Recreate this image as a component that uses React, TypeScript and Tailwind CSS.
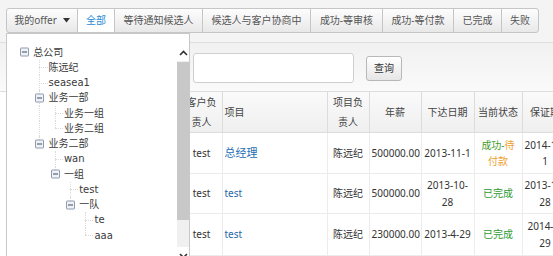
import React from "react";

type TreeNode = {
  level: number;
  label: string;
  parent?: boolean;
  last?: boolean;
  lines?: number[];
};

const tree: TreeNode[] = [
  { level: 0, label: "总公司", parent: true, last: true },
  { level: 1, label: "陈远纪" },
  { level: 1, label: "seasea1" },
  { level: 1, label: "业务一部", parent: true },
  { level: 2, label: "业务一组", lines: [1] },
  { level: 2, label: "业务二组", last: true, lines: [1] },
  { level: 1, label: "业务二部", parent: true, last: true },
  { level: 2, label: "wan" },
  { level: 2, label: "一组", parent: true, last: true },
  { level: 3, label: "test" },
  { level: 3, label: "一队", parent: true, last: true },
  { level: 4, label: "te" },
  { level: 4, label: "aaa", last: true },
];

const tabs = [
  { label: "全部", w: "w-[37px]", active: true },
  { label: "等待通知候选人", w: "w-[88px]" },
  { label: "候选人与客户协商中", w: "w-[108px]" },
  { label: "成功-等审核", w: "w-[72px]" },
  { label: "成功-等付款", w: "w-[71px]" },
  { label: "已完成", w: "w-[48px]" },
  { label: "失败", w: "w-[36px]", last: true },
];

const rows = [
  {
    h: "h-[41px]",
    cells: ["李明", "华信科技", "test"],
    project: "总经理",
    big: true,
    owner: "陈远纪",
    salary: "500000.00",
    date: "2013-11-1",
    status: "pay",
    guarantee: "2014-11-1",
  },
  {
    h: "h-[40px]",
    cells: ["王芳", "华信科技", "test"],
    project: "test",
    owner: "陈远纪",
    salary: "500000.00",
    date: "2013-10-28",
    status: "done",
    guarantee: "2013-11-28",
  },
  {
    h: "h-[42px]",
    cells: ["张伟", "远景集团", "test"],
    project: "test",
    owner: "陈远纪",
    salary: "230000.00",
    date: "2013-4-29",
    status: "done",
    guarantee: "2014-4-29",
  },
];

const VLine = ({ half }: { half?: boolean }) => (
  <span
    className={
      "absolute left-[7px] top-0 border-l border-dotted border-[#dadada] " +
      (half ? "h-1/2" : "bottom-0")
    }
  />
);

const Minus = () => (
  <span className="absolute left-[3px] top-1/2 -translate-y-1/2 flex h-[9px] w-[9px] items-center justify-center rounded-[1px] border border-[#8e9cae] bg-[#eef2f6]">
    <span className="h-px w-[5px] bg-[#3d4b5c]" />
  </span>
);

const TreeRow = ({ node }: { node: TreeNode }) => {
  const cols = [];
  for (let k = 0; k < node.level; k++) {
    cols.push(
      <span key={k} className="relative h-full w-[15.3px] shrink-0">
        {node.lines?.includes(k) && <VLine />}
      </span>
    );
  }
  return (
    <div className="flex h-[15.25px] items-stretch">
      {cols}
      <span className="relative h-full w-[15.3px] shrink-0">
        {node.level > 0 && <VLine half={node.last} />}
        {node.parent ? (
          <Minus />
        ) : (
          <span className="absolute left-[7px] right-0 top-1/2 border-t border-dotted border-[#dadada]" />
        )}
      </span>
      <span className="whitespace-nowrap pl-[1px] leading-[15.25px]">{node.label}</span>
    </div>
  );
};

const Chevron = ({ down }: { down?: boolean }) => (
  <svg width="9" height="6" viewBox="0 0 9 6" className={down ? "rotate-180" : ""}>
    <polyline points="1,5 4.5,1.5 8,5" fill="none" stroke="#333" strokeWidth="1.6" />
  </svg>
);

const OrgDropdown = () => (
  <div className="absolute left-[6px] top-[33px] flex h-[232px] w-[184px] border border-[#c8c8c8] bg-white font-['DejaVu_Sans','Noto_Sans_CJK_SC',sans-serif] text-[10px] text-[#3a3a3a]">
    <div className="flex-1 pl-[10px] pt-[10.5px]">
      {tree.map((n, i) => (
        <TreeRow key={i} node={n} />
      ))}
    </div>
    <div className="mt-[10px] flex w-[12px] flex-col bg-[#f0f0f0]">
      <div className="flex h-[17px] items-center justify-center bg-white">
        <Chevron />
      </div>
      <div className="mt-[1px] h-[158px] bg-[#c8c8c8]" />
      <div className="flex-1" />
      <div className="flex h-[17px] items-center justify-center bg-white">
        <Chevron down />
      </div>
    </div>
  </div>
);

const Status = ({ s }: { s: string }) =>
  s === "pay" ? (
    <span>
      <span className="text-[#3f9b2d]">成功-</span>
      <span className="text-[#f0a030]">待付款</span>
    </span>
  ) : (
    <span className="text-[#2f9a31]">已完成</span>
  );

export default function App() {
  const th =
    "border-r border-b border-[#dcdcdc] bg-gradient-to-b from-[#fafafa] to-[#efefef] px-[2px] text-center align-middle font-normal leading-[20px] text-[#444]";
  const td = "border-r border-b border-[#ececec] px-[2px] text-center align-middle leading-[16.5px]";

  return (
    <div className="relative h-[256px] w-[553px] overflow-hidden bg-[#f4f4f4] font-['Noto_Sans','Noto_Sans_CJK_SC',sans-serif] text-[10px] text-[#333]">
      <div className="flex pl-[6px] pt-[8px]">
        <div className="flex h-[25px] rounded-[3px] border border-[#c6c6c6] bg-gradient-to-b from-[#fdfdfd] to-[#e8e8e8] text-[#555]">
          <div className="flex w-[71px] items-center justify-center gap-[6px] border-r border-[#c6c6c6]">
            <span>我的offer</span>
            <svg width="7" height="5" viewBox="0 0 7 5">
              <polygon points="0,0 7,0 3.5,4.5" fill="#333" />
            </svg>
          </div>
          {tabs.map((t) => (
            <div
              key={t.label}
              className={
                "flex items-center justify-center " +
                t.w +
                (t.last ? "" : " border-r border-[#c6c6c6]") +
                (t.active ? " bg-white text-[#2a8ad6]" : "")
              }
            >
              {t.label}
            </div>
          ))}
        </div>
      </div>

      <div className="mt-[9px] flex h-[50px] items-start border-y border-[#dedede] bg-gradient-to-b from-[#f1f1f1] to-[#fafafa] pl-[193px] pt-[10px]">
        <input className="h-[30px] w-[161px] rounded-[3px] border border-[#cfcfcf] bg-white outline-none" />
        <button className="ml-[12px] mt-[3px] h-[25px] w-[36px] rounded-[3px] border border-[#b8b8b8] bg-gradient-to-b from-white to-[#e6e6e6] text-[10px] text-[#333]">
          查询
        </button>
      </div>

      <div className="overflow-hidden bg-white pl-[6px]">
        <table className="w-[622px] table-fixed border-collapse">
          <colgroup>
            <col className="w-[90px]" />
            <col className="w-[85px]" />
            <col className="w-[41px]" />
            <col className="w-[105px]" />
            <col className="w-[42px]" />
            <col className="w-[52px]" />
            <col className="w-[53px]" />
            <col className="w-[48px]" />
            <col className="w-[46px]" />
            <col className="w-[60px]" />
          </colgroup>
          <thead>
            <tr className="h-[40px]">
              <th className={th}>候选人</th>
              <th className={th}>客户</th>
              <th className={th}>客户负责人</th>
              <th className={th + " !text-left"}>项目</th>
              <th className={th}>项目负责人</th>
              <th className={th}>年薪</th>
              <th className={th}>下达日期</th>
              <th className={th}>当前状态</th>
              <th className={th}>保证期</th>
              <th className={th}>操作</th>
            </tr>
          </thead>
          <tbody>
            {rows.map((r, i) => (
              <tr key={i} className={r.h}>
                <td className={td}>{r.cells[0]}</td>
                <td className={td}>{r.cells[1]}</td>
                <td className={td}>{r.cells[2]}</td>
                <td className={td + " !text-left"}>
                  <span className={r.big ? "text-[11px] text-[#1f6eb6]" : "text-[#2868a8]"}>{r.project}</span>
                </td>
                <td className={td}>{r.owner}</td>
                <td className={td}>{r.salary}</td>
                <td className={td}>{r.date}</td>
                <td className={td}>
                  <Status s={r.status} />
                </td>
                <td className={td}>{r.guarantee}</td>
                <td className={td}>查看</td>
              </tr>
            ))}
          </tbody>
        </table>
      </div>

      <OrgDropdown />
    </div>
  );
}
